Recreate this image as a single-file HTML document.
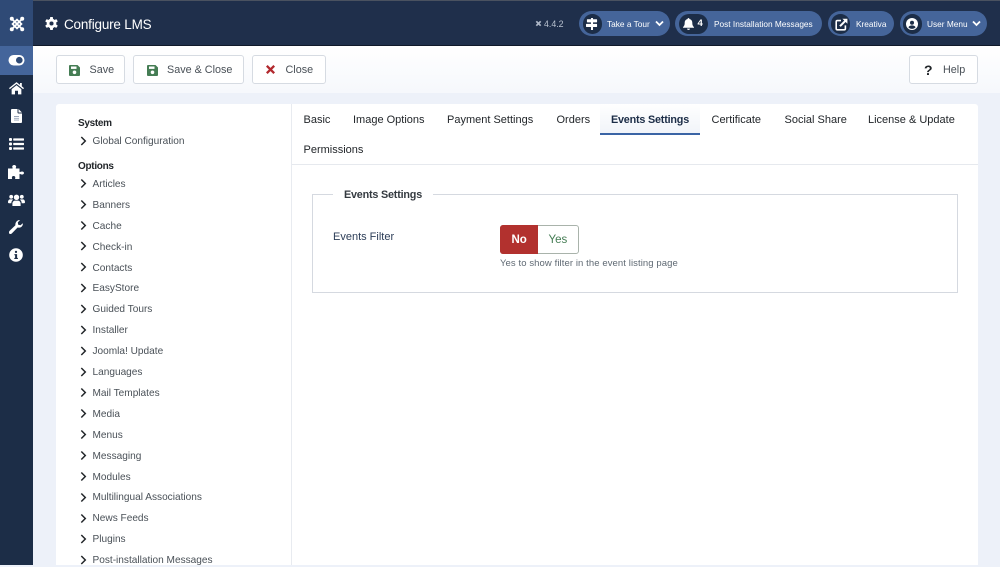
<!DOCTYPE html>
<html><head><meta charset="utf-8"><title>Configure LMS</title>
<style>
html,body{margin:0;padding:0}
body{width:1000px;height:565px;overflow:hidden;position:relative;background:#edf1f9;font-family:"Liberation Sans",sans-serif;color:#22262a}
.a{position:absolute;white-space:nowrap}
svg{position:absolute;display:block}
.btn{position:absolute;top:55px;height:29px;background:#fff;border:1px solid #d6dbe2;border-radius:3px;box-sizing:border-box}
.bt{font-size:10.8px;color:#495057;line-height:14px;top:63px}
.pill{position:absolute;top:11px;height:25px;border-radius:13px;background:#45659a}
.circ{position:absolute;top:13.5px;height:20px;border-radius:10px;background:#1c2d47}
.pt{font-size:8.3px;color:#fff;line-height:12px;top:17.5px}
.tab{font-size:11px;line-height:14px;color:#22262a;top:112.5px}
.side{font-size:10.1px;line-height:13px;color:#495057;left:92.5px}
.head{font-size:10px;line-height:13px;color:#22262a;font-weight:bold;left:78px;letter-spacing:-.3px}
</style></head><body>
<div class="a" style="left:0;top:0;width:1000px;height:46px;background:#1f2f4b;border-top:1px solid #4a5260;box-sizing:border-box;border-bottom:1px solid #10192a"></div>
<div class="a" style="left:0;top:0;width:33px;height:46px;background:#2f4a76"></div>
<div class="a" style="left:0;top:46px;width:33px;height:519px;background:#1c2d47"></div>
<div class="a" style="left:0;top:46px;width:33px;height:29px;background:#44659b"></div>
<div class="a" style="left:33px;top:46px;width:967px;height:47px;background:linear-gradient(#fff,#f6f8fc)"></div>

<!-- joomla logo -->
<svg style="left:9px;top:16px" width="16" height="16" viewBox="0 0 16 16" fill="none" stroke="#fff"><path d="M3 3L13 13M13 3L3 13" stroke-width="1.8"/><path d="M8 3.6L12.4 8L8 12.4L3.6 8Z" stroke-width="1.8"/><circle cx="2.8" cy="2.8" r="2" fill="#fff" stroke="none"/><circle cx="13.2" cy="2.8" r="2" fill="#fff" stroke="none"/><circle cx="2.8" cy="13.2" r="2" fill="#fff" stroke="none"/><circle cx="13.2" cy="13.2" r="2" fill="#fff" stroke="none"/></svg>
<!-- toggle -->
<svg style="left:8px;top:55px" width="17" height="12" viewBox="0 0 17 12"><rect x=".5" y="0" width="16" height="10.5" rx="5.2" fill="#fff"/><circle cx="11.3" cy="5.2" r="3.3" fill="#2f4a76"/></svg>
<!-- home -->
<svg style="left:9px;top:82px" width="15" height="12.5" viewBox="0 0 17 14" fill="#fff"><path d="M8.5 0L12.5 3.2V1H14.500V4.800L17 6.800L16 8L8.500 2L1 8L0 6.800Z"/><path d="M8.500 3.600L14 8V14H10.200V9.800H6.800V14H3V8Z"/></svg>
<!-- file -->
<svg style="left:11px;top:109px" width="11" height="14" viewBox="0 0 11 14"><path d="M0 1Q0 0 1 0H6.500V3.500Q6.500 4.500 7.500 4.500H11V13Q11 14 10 14H1Q0 14 0 13Z M7.500 0L11 3.500H7.500Z" fill="#fff"/><path d="M3 7.500H8M3 9.300H8M3 11.100H8" stroke="#9aa5b8" stroke-width=".9"/></svg>
<!-- list -->
<svg style="left:9px;top:138px" width="15" height="12" viewBox="0 0 15 12" fill="#fff"><rect x="0" y="0" width="3" height="3" rx="1"/><rect x="0" y="4.500" width="3" height="3" rx="1"/><rect x="0" y="9" width="3" height="3" rx="1"/><rect x="4.200" y=".4" width="10.800" height="2.200" rx=".6"/><rect x="4.200" y="4.900" width="10.800" height="2.200" rx=".6"/><rect x="4.200" y="9.400" width="10.800" height="2.200" rx=".6"/></svg>
<!-- puzzle -->
<svg style="left:8px;top:165px" width="16" height="14" viewBox="0 0 16 14" fill="#fff"><path d="M0 3.500H4.200C4.800 3.500 4.800 3 4.400 2.400C3.800 1.200 4.800 0 6.200 0C7.600 0 8.600 1.200 8 2.400C7.600 3 7.600 3.500 8.200 3.500H11.500V6.500C11.500 7.300 12.100 7.200 12.700 6.800C14 6 16 6.600 16 8C16 9.400 14 10 12.700 9.200C12.100 8.800 11.500 8.700 11.500 9.500V14H7.500C7 14 7 13.400 7.200 13C7.600 12 6.800 11 5.600 11C4.400 11 3.600 12 4 13C4.200 13.400 4.200 14 3.700 14H0Z"/></svg>
<!-- users -->
<svg style="left:8px;top:194px" width="17" height="12" viewBox="0 0 17 12" fill="#fff"><circle cx="3.200" cy="2.800" r="1.900"/><circle cx="13.800" cy="2.800" r="1.900"/><circle cx="8.500" cy="3.300" r="2.700"/><path d="M4.400 12V9.600C4.400 7.600 6 6.600 7 6.600H10C11 6.600 12.600 7.600 12.600 9.600V12Z"/><path d="M0 8.200C0 6.400 1 5.400 2.200 5.400H4.200C4.600 5.400 4.900 5.600 5.100 5.800C4 6.600 3.400 7.600 3.300 9.200H1C.4 9.200 0 8.800 0 8.200Z M17 8.200C17 6.400 16 5.400 14.800 5.400H12.800C12.400 5.400 12.100 5.600 11.900 5.800C13 6.600 13.600 7.600 13.700 9.200H16C16.600 9.200 17 8.800 17 8.200Z"/></svg>
<!-- wrench -->
<svg style="left:9px;top:220px" width="14" height="14" viewBox="0 0 14 14" fill="#fff"><path d="M13.800 3.200C14.200 5.400 12.400 7.800 9.600 7.600C9.200 7.600 8.900 7.600 8.600 7.500L3 13.200C2 14.200.7 14.200 0 13.400C-.4 12.600-.1 11.600.7 10.800L6.400 5.300C6 2.400 8.400-.3 11 .05L8.800 2.400L9.200 4.700L11.500 5.200Z"/></svg>
<!-- info -->
<svg style="left:9px;top:248px" width="14" height="14" viewBox="0 0 14 14"><circle cx="7" cy="7" r="6.800" fill="#fff"/><rect x="5.900" y="2.800" width="2.200" height="2.200" rx="1" fill="#1c2d47"/><path d="M5.400 6.100H8.100V9.900H8.900V11H5.300V9.900H6.100V7.200H5.400Z" fill="#1c2d47"/></svg>

<!-- cog -->
<svg style="left:45px;top:17px" width="13" height="13" viewBox="0 0 14 14"><g fill="#fff"><circle cx="7" cy="7" r="5.200"/><rect x="5.400" y="0" width="3.200" height="14" rx=".8"/><rect x="5.400" y="0" width="3.200" height="14" rx=".8" transform="rotate(60 7 7)"/><rect x="5.400" y="0" width="3.200" height="14" rx=".8" transform="rotate(120 7 7)"/></g><circle cx="7" cy="7" r="2.200" fill="#1f2f4b"/></svg>
<div class="a" style="left:64px;top:15.500px;font-size:13.500px;line-height:17px;color:#fff;letter-spacing:-.2px">Configure LMS</div>

<!-- version -->
<svg style="left:535px;top:20px" width="7" height="7" viewBox="0 0 16 16" fill="none" stroke="#aeb8c8"><path d="M3 3L13 13M13 3L3 13" stroke-width="4"/></svg>
<div class="a" style="left:544px;top:17.500px;font-size:8.800px;line-height:12px;color:#b9c2d0">4.4.2</div>

<!-- pills -->
<div class="pill" style="left:579px;width:91px"></div>
<div class="circ" style="left:582.500px;width:19.500px"></div>
<svg style="left:586px;top:17.500px" width="12" height="12" viewBox="0 0 13 13" fill="#fff"><rect x="5.400" y="0" width="2.200" height="13"/><rect x="1" y="1.400" width="11" height="3.400" rx=".6"/><rect x="0" y="6.400" width="12" height="3.400" rx=".6"/></svg>
<div class="a pt" style="left:607px">Take a Tour</div>
<svg style="left:655px;top:20px" width="9" height="7" viewBox="0 0 9 7" fill="none" stroke="#fff" stroke-width="1.800"><path d="M1 1.500L4.500 5L8 1.500"/></svg>

<div class="pill" style="left:675px;width:147px"></div>
<div class="circ" style="left:679px;width:29px"></div>
<svg style="left:682.500px;top:17.500px" width="11" height="12" viewBox="0 0 11 12" fill="#fff"><path d="M5.500 0C6.100 0 6.400 .4 6.400 1C8.200 1.400 9.300 2.800 9.300 4.800C9.300 7.400 10 8 11 9.200V9.800H0V9.200C1 8 1.700 7.400 1.700 4.800C1.700 2.800 2.800 1.400 4.600 1C4.600 .4 4.900 0 5.500 0Z"/><path d="M4 10.600H7C7 11.400 6.300 12 5.500 12C4.700 12 4 11.400 4 10.600Z"/></svg>
<div class="a" style="left:697.500px;top:17.500px;font-size:9.500px;line-height:12px;color:#fff;font-weight:bold">4</div>
<div class="a pt" style="left:714px">Post Installation Messages</div>

<div class="pill" style="left:828px;width:66px"></div>
<div class="circ" style="left:830.500px;width:19px"></div>
<svg style="left:834.500px;top:17.500px" width="13" height="13" viewBox="0 0 13 13" fill="none" stroke="#fff"><path d="M6 2.600H2.400Q1.200 2.600 1.200 3.800V10.600Q1.200 11.800 2.400 11.800H9.200Q10.400 11.800 10.400 10.600V7.400" stroke-width="1.600"/><path d="M5 8.200L11 2.200" stroke-width="2"/><path d="M7.400 .8H12.400V5.800Z" fill="#fff" stroke="none"/></svg>
<div class="a pt" style="left:856px">Kreativa</div>

<div class="pill" style="left:900px;width:87px"></div>
<div class="circ" style="left:902.500px;width:19.500px"></div>
<svg style="left:906px;top:17.500px" width="12" height="12" viewBox="0 0 12 12"><circle cx="6" cy="6" r="6" fill="#fff"/><circle cx="6" cy="4.700" r="2" fill="#1c2d47"/><path d="M2.400 9.400C3 7.900 4.400 7.400 6 7.400C7.600 7.400 9 7.900 9.600 9.400C8.600 10.400 7.400 10.900 6 10.900C4.600 10.900 3.400 10.400 2.400 9.400Z" fill="#1c2d47"/></svg>
<div class="a pt" style="left:927px">User Menu</div>
<svg style="left:972px;top:20px" width="9" height="7" viewBox="0 0 9 7" fill="none" stroke="#fff" stroke-width="1.800"><path d="M1 1.500L4.500 5L8 1.500"/></svg>

<!-- toolbar -->
<div class="btn" style="left:56px;width:69px"></div>
<svg style="left:69px;top:64.500px" width="11" height="11" viewBox="0 0 11 11"><path d="M1 0H8.500L11 2.500V10Q11 11 10 11H1Q0 11 0 10V1Q0 0 1 0Z" fill="#457d54"/><rect x="2" y="1.500" width="5.500" height="2.400" fill="#fff"/><circle cx="5.500" cy="7.300" r="1.800" fill="#fff"/></svg>
<div class="a bt" style="left:89.500px">Save</div>
<div class="btn" style="left:133px;width:111px"></div>
<svg style="left:147px;top:64.500px" width="11" height="11" viewBox="0 0 11 11"><path d="M1 0H8.500L11 2.500V10Q11 11 10 11H1Q0 11 0 10V1Q0 0 1 0Z" fill="#457d54"/><rect x="2" y="1.500" width="5.500" height="2.400" fill="#fff"/><circle cx="5.500" cy="7.300" r="1.800" fill="#fff"/></svg>
<div class="a bt" style="left:167px">Save &amp; Close</div>
<div class="btn" style="left:252px;width:74px"></div>
<svg style="left:266px;top:65px" width="9" height="9" viewBox="0 0 9 9" stroke="#b2292e" stroke-width="2.300"><path d="M.8 .8L8.200 8.200M8.200 .8L.8 8.200"/></svg>
<div class="a bt" style="left:285.500px">Close</div>
<div class="btn" style="left:909px;width:69px"></div>
<div class="a" style="left:924px;top:61.500px;font-size:14px;line-height:16px;font-weight:bold;color:#22262a">?</div>
<div class="a bt" style="left:943px">Help</div>

<!-- panels -->
<div class="a" style="left:56px;top:104px;width:922px;height:461px;background:#fff;border-radius:3px 3px 0 0"></div>
<div class="a" style="left:291px;top:104px;width:1px;height:461px;background:#e8ebf0"></div>
<div class="a" style="left:292px;top:164px;width:686px;height:1px;background:#e6e9ee"></div>

<!-- side -->
<div class="a head" style="top:116.500px">System</div>
<div class="a side" style="top:135px">Global Configuration</div>
<div class="a head" style="top:159.500px">Options</div>
<div class="a side" style="top:177.500px">Articles</div>
<div class="a side" style="top:198.500px">Banners</div>
<div class="a side" style="top:219.500px">Cache</div>
<div class="a side" style="top:240.500px">Check-in</div>
<div class="a side" style="top:261.500px">Contacts</div>
<div class="a side" style="top:282px">EasyStore</div>
<div class="a side" style="top:303px">Guided Tours</div>
<div class="a side" style="top:324px">Installer</div>
<div class="a side" style="top:345px">Joomla! Update</div>
<div class="a side" style="top:365.500px">Languages</div>
<div class="a side" style="top:386.500px">Mail Templates</div>
<div class="a side" style="top:407.500px">Media</div>
<div class="a side" style="top:428.500px">Menus</div>
<div class="a side" style="top:449.500px">Messaging</div>
<div class="a side" style="top:470.500px">Modules</div>
<div class="a side" style="top:491px">Multilingual Associations</div>
<div class="a side" style="top:512px">News Feeds</div>
<div class="a side" style="top:533px">Plugins</div>
<div class="a side" style="top:554px">Post-installation Messages</div>
<svg style="left:0;top:0;width:1000px;height:565px" viewBox="0 0 1000 565" fill="none" stroke="#22262a" stroke-width="1.500"><path d="M81.300 137L85.300 141L81.300 145M81.300 179.500L85.300 183.500L81.300 187.500M81.300 200.500L85.300 204.500L81.300 208.500M81.300 221.500L85.300 225.500L81.300 229.500M81.300 242L85.300 246L81.300 250M81.300 263L85.300 267L81.300 271M81.300 284L85.300 288L81.300 292M81.300 305L85.300 309L81.300 313M81.300 326L85.300 330L81.300 334M81.300 347L85.300 351L81.300 355M81.300 368L85.300 372L81.300 376M81.300 388.500L85.300 392.500L81.300 396.500M81.300 409.500L85.300 413.500L81.300 417.500M81.300 430.500L85.300 434.500L81.300 438.500M81.300 451.500L85.300 455.500L81.300 459.500M81.300 472.500L85.300 476.500L81.300 480.500M81.300 493.500L85.300 497.500L81.300 501.500M81.300 514.500L85.300 518.500L81.300 522.500M81.300 535L85.300 539L81.300 543M81.300 556L85.300 560L81.300 564"/></svg>

<!-- tabs -->
<div class="a" style="left:600px;top:104px;width:100px;height:29px;background:linear-gradient(#fff,#f1f4f9)"></div>
<div class="a" style="left:600px;top:133px;width:100px;height:2px;background:#3a64a5"></div>
<div class="a tab" style="left:303.500px">Basic</div>
<div class="a tab" style="left:353px">Image Options</div>
<div class="a tab" style="left:447px">Payment Settings</div>
<div class="a tab" style="left:556.500px">Orders</div>
<div class="a tab" style="left:611px;font-weight:bold;color:#1c2d47;font-size:10.800px;letter-spacing:-.2px">Events Settings</div>
<div class="a tab" style="left:711.500px">Certificate</div>
<div class="a tab" style="left:784.500px">Social Share</div>
<div class="a tab" style="left:868px">License &amp; Update</div>
<div class="a tab" style="left:303.500px;top:142.500px">Permissions</div>

<!-- fieldset -->
<div class="a" style="left:312px;top:194px;width:646px;height:99px;border:1px solid #d5d9e0;box-sizing:border-box"></div>
<div class="a" style="left:333px;top:186px;width:100px;height:16px;background:#fff"></div>
<div class="a" style="left:344px;top:187.500px;font-size:10.800px;line-height:14px;font-weight:bold;color:#343a40;letter-spacing:-.2px">Events Settings</div>
<div class="a" style="left:333px;top:230.500px;font-size:11px;line-height:13px;color:#2d3e58">Events Filter</div>
<div class="a" style="left:500px;top:225px;width:79px;height:29px;border:1px solid #a9b3ab;border-radius:3px;box-sizing:border-box;background:#fff"></div>
<div class="a" style="left:500px;top:225px;width:37.500px;height:29px;background:#b2312e;border-radius:3px 0 0 3px"></div>
<div class="a" style="left:511.500px;top:232.500px;font-size:11.500px;line-height:14px;font-weight:bold;color:#fff">No</div>
<div class="a" style="left:548.500px;top:232.500px;font-size:11.500px;line-height:14px;color:#457d54">Yes</div>
<div class="a" style="left:500px;top:257.500px;font-size:9.500px;line-height:12px;color:#5f6973;letter-spacing:.09px">Yes to show filter in the event listing page</div>
</body></html>
